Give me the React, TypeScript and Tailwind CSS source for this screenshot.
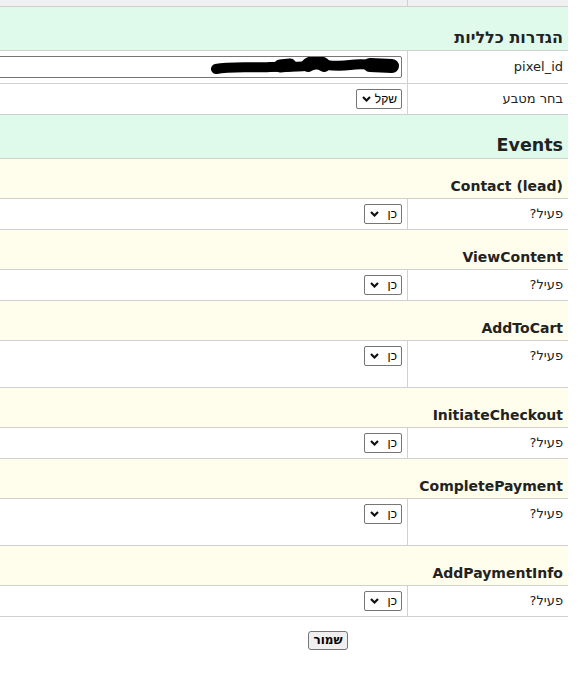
const events = [
  { name: "Contact (lead)", tall: false },
  { name: "ViewContent", tall: false },
  { name: "AddToCart", tall: true },
  { name: "InitiateCheckout", tall: false },
  { name: "CompletePayment", tall: true },
  { name: "AddPaymentInfo", tall: false },
];

const Chevron = () => (
  <svg width="9" height="6" viewBox="0 0 9 6" className="shrink-0">
    <polyline points="1,1 4.5,4.5 8,1" fill="none" stroke="#111" strokeWidth="2.2" />
  </svg>
);

const FakeSelect = ({ value, width }: { value: string; width: string }) => (
  <div
    className={`${width} h-[20px] flex items-center justify-between border border-[#767676] rounded-[2px] bg-white pr-[4px] pl-[5px] text-[12px] text-black`}
    style={{ fontFamily: '"Liberation Sans", Arial, sans-serif' }}
  >
    <span>{value}</span>
    <Chevron />
  </div>
);

const Row = ({
  label,
  children,
  height,
  labelTop = "pt-[7px]",
}: {
  label: string;
  children?: React.ReactNode;
  height: string;
  labelTop?: string;
}) => (
  <div className={`flex border-b border-[#d0d0d0] ${height}`}>
    <div
      className={`w-[161px] shrink-0 border-l border-[#d0d0d0] px-[5px] ${labelTop} text-[13px] leading-[16px] text-[#222]`}
    >
      {label}
    </div>
    <div className="flex-1 pr-[5px] pt-[5px] flex">{children}</div>
  </div>
);

const SectionHead = ({ title, size }: { title: string; size: string }) => (
  <div className="h-[44px] border-b border-[#d0d0d0] bg-[#dffaeb] flex items-end px-[5px] pb-[4px]">
    <h3 className={`${size} font-bold text-[#222] leading-none`}>{title}</h3>
  </div>
);

const EventHead = ({ title }: { title: string }) => (
  <div className="h-[40px] border-b border-[#d0d0d0] bg-[#fffeec] flex items-end px-[5px] pb-[5px]">
    <h4 className="text-[14px] font-bold text-[#222] leading-none">{title}</h4>
  </div>
);

// redacted pixel id
const Scribble = () => (
  <svg width="190" height="20" viewBox="0 0 190 20" className="shrink-0">
    <g fill="none" stroke="#000" strokeLinecap="round" strokeLinejoin="round">
      <path d="M6 12 C 20 9, 40 11, 60 10 S 90 11, 100 8 S 120 11, 140 8 S 170 11, 183 9" strokeWidth="10" />
      <path d="M70 9 L 80 8" strokeWidth="13" />
      <path d="M98 8 C 104 4, 110 5, 114 8" strokeWidth="14" />
      <path d="M160 8 L 182 9" strokeWidth="14" />
    </g>
  </svg>
);

export default function App() {
  return (
    <div
      dir="rtl"
      className="w-[568px] overflow-hidden bg-white"
      style={{ fontFamily: '"DejaVu Sans", Verdana, sans-serif' }}
    >
      <div className="w-[760px]">
        {/* tail of the previous table */}
        <div className="flex h-[7px] border-b border-[#d0d0d0] bg-[#f0f0f0]">
          <div className="w-[161px] shrink-0 border-l border-[#d0d0d0]" />
          <div className="flex-1" />
        </div>

        <SectionHead title="הגדרות כלליות" size="text-[16px]" />
        <Row label="pixel_id" height="h-[33px]" labelTop="pt-[8px]">
          <div className="w-[560px] h-[22px] border border-[#767676] rounded-[2px] flex items-center pr-[1px]">
            <Scribble />
          </div>
        </Row>
        <Row label="בחר מטבע" height="h-[31px]">
          <FakeSelect value="שקל" width="w-[46px]" />
        </Row>

        <SectionHead title="Events" size="text-[17.5px]" />
        {events.map((ev) => (
          <div key={ev.name}>
            <EventHead title={ev.name} />
            <Row label="פעיל?" height={ev.tall ? "h-[47px]" : "h-[31px]"}>
              <FakeSelect value="כן" width="w-[38px]" />
            </Row>
          </div>
        ))}
      </div>

      <div className="pr-[220px] pt-[10px] pb-[20px]">
        <button className="h-[19px] w-[40px] border border-[#767676] rounded-[3px] bg-[#efefef] text-[12px] font-bold text-black leading-none">
          שמור
        </button>
      </div>
    </div>
  );
}
